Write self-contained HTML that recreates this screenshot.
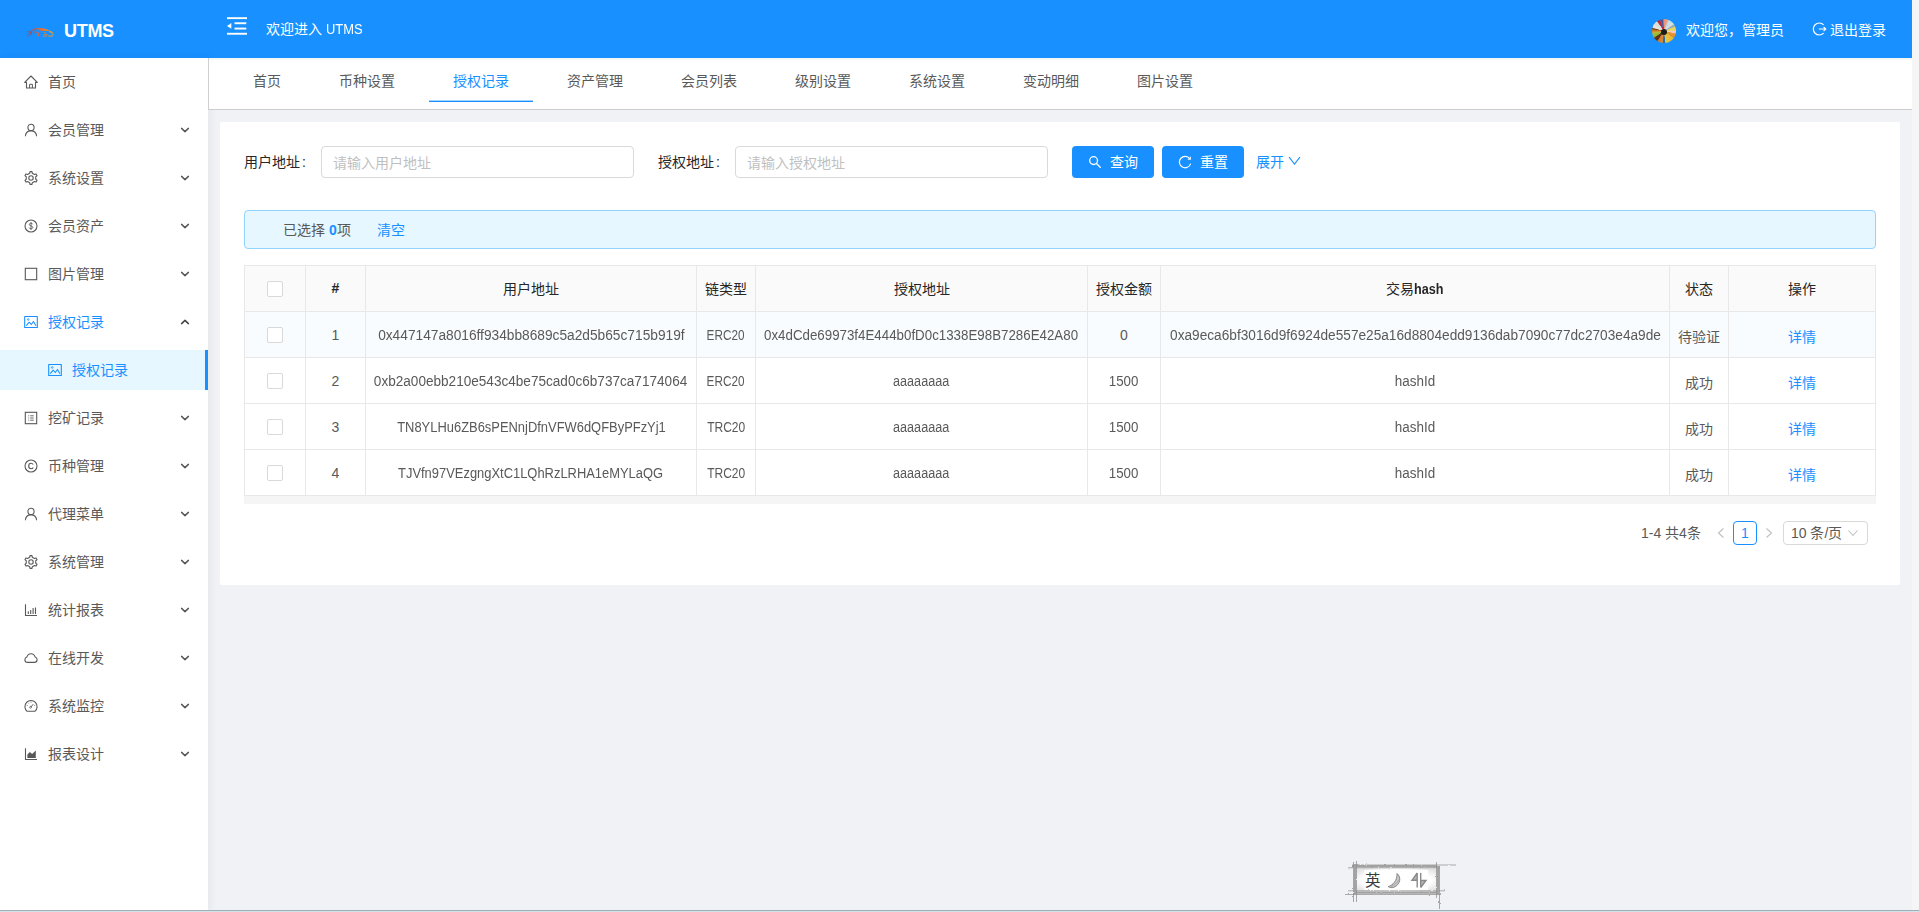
<!DOCTYPE html>
<html lang="zh-CN">
<head>
<meta charset="utf-8">
<title>UTMS</title>
<style>
*{box-sizing:border-box;margin:0;padding:0}
html,body{width:1919px;height:912px;overflow:hidden}
body{font-family:"Liberation Sans",sans-serif;font-size:14px;color:#595959;background:#f0f2f5;position:relative}
.abs{position:absolute}
svg{display:block}
/* header */
#hdr{left:0;top:0;width:1912px;height:58px;background:#1890ff;color:#fff}
#rstrip{left:1912px;top:0;width:7px;height:912px;background:#f5f5f5}
#logo-t{left:64px;top:19px;font-size:18px;font-weight:bold;line-height:24px;letter-spacing:-0.3px}
#welcome{left:266px;top:17px;font-size:14px;line-height:24px}
#user{left:1686px;top:18px;font-size:14px;line-height:24px}
#logout{left:1830px;top:18px;font-size:14px;line-height:24px}
/* sidebar */
#side{left:0;top:58px;width:208px;height:852px;background:#fff;box-shadow:2px 0 8px rgba(29,35,41,.06)}
.mi{position:absolute;left:0;width:208px;height:40px;line-height:40px;color:#595959}
.mi .ic{position:absolute;left:24px;top:13px;width:14px;height:14px}
.mi .tx{position:absolute;left:48px;top:0;white-space:nowrap}
.mi .ar{position:absolute;left:180px;top:15px;width:10px;height:10px}
.mi.sel{color:#1890ff}
.mi.sub{background:#e6f7ff;color:#1890ff;border-right:3px solid #1890ff}
.mi.sub .ic{left:48px}
.mi.sub .tx{left:72px}
/* tabs */
#tabs{left:208px;top:58px;width:1704px;height:52px;background:#fff;border-left:1px solid #d0d0d0;border-bottom:1px solid #ccc;background-image:linear-gradient(rgba(0,21,41,.05),rgba(0,21,41,0) 3px)}
.tab{position:absolute;top:11px;height:24px;line-height:24px;width:104px;text-align:center;color:#595959;white-space:nowrap}
.tab.on{color:#1890ff}
#ink{left:429px;top:100px;width:104px;height:2px;background:linear-gradient(rgba(24,144,255,.4) 0 1px,#1890ff 1px 2px)}
/* card */
#card{left:220px;top:122px;width:1680px;height:463px;background:#fff;border-radius:2px}
.lbl{position:absolute;top:151px;line-height:22px;color:#262626;white-space:nowrap}
.inp{position:absolute;top:146px;height:32px;width:313px;border:1px solid #d9d9d9;border-radius:4px;background:#fff;color:#bfbfbf;line-height:31px;padding-top:1px;padding-left:11px;white-space:nowrap}
.btn{position:absolute;top:146px;height:32px;width:82px;border-radius:4px;background:#1890ff;color:#fff;line-height:32px;white-space:nowrap}
#alert{left:244px;top:210px;width:1632px;height:39px;background:#e6f7ff;border:1px solid #91d5ff;border-radius:4px;line-height:38px}
/* table */
#tbl{left:244px;top:265px;width:1631px;border-collapse:collapse;table-layout:fixed;background:#fff}
#tbl th,#tbl td{border:1px solid #e8e8e8;height:46px;text-align:center;white-space:nowrap;overflow:hidden;padding:0;font-size:14px}
#tbl th{background:#fafafa;color:#262626;font-weight:normal;padding-bottom:1px}
#tbl td span{display:inline-block}
#tbl td{color:#595959}
#tbl tr.hov td{background:#f9fcfe}
#tbl th .cb{position:relative;top:0}
#tbl a{color:#1890ff;position:relative;top:1px}
#tbl td span.c6{position:relative;top:1px}
.cb{display:inline-block;width:16px;height:16px;border:1px solid #d9d9d9;border-radius:2px;background:#fff;vertical-align:middle}
#hsb{left:244px;top:496px;width:1632px;height:8px;background:#f5f5f5}
/* pagination */
.pg{position:absolute;top:521px;height:24px;line-height:24px;white-space:nowrap}
</style>
</head>
<body>
<div id="hdr" class="abs"></div>
<div id="rstrip" class="abs"></div>
<div id="logo-t" class="abs" style="color:#fff">UTMS</div>
<div id="welcome" class="abs" style="color:#fff">欢迎进入 <span style="display:inline-block;transform:scaleX(.924);transform-origin:0 50%">UTMS</span></div>
<div id="user" class="abs" style="color:#fff">欢迎您，管理员</div>
<div id="logout" class="abs" style="color:#fff">退出登录</div>


<svg class="abs" style="left:26px;top:26px;width:28px;height:12px" viewBox="0 0 28 12" fill="none"><defs><linearGradient id="lg" x1="0" y1="0" x2="28" y2="0" gradientUnits="userSpaceOnUse"><stop offset="0" stop-color="#b5302a"/><stop offset=".45" stop-color="#e8622c"/><stop offset="1" stop-color="#f6a623"/></linearGradient></defs>
<path d="M0.800 5.600H4M1.600 7.600H4.500M0.600 9.600H4" stroke="#b5302a" stroke-width=".8" opacity=".45"/>
<path d="M4.200 6.800C5 4.600 7 3.200 10 2.800 13.500 2.400 17.500 2.700 20.500 3.800 23 4.700 25.200 5.600 26.600 6.600" stroke="url(#lg)" stroke-width="1"/>
<path d="M11.500 2.700C15.500 2.300 19.500 3 22.800 4.900L14.500 4.700Z" fill="url(#lg)"/>
<path d="M5.300 5.400V9.200M7.700 4.300V7.600M12.200 6.400V10.300" stroke="url(#lg)" stroke-width="1.300"/>
<path d="M9.500 7.200C10 6 11.300 6 11.800 7" stroke="url(#lg)" stroke-width=".9"/>
<path d="M23.500 6C25.500 6.200 27.200 7.200 27.200 8.600 27.200 9.600 26.200 10.100 24.800 10.100" stroke="url(#lg)" stroke-width=".9"/>
<path d="M17.500 8.700H21.500M17 10.100H20.800M22.200 10.100H25.500M18 6.600H20" stroke="url(#lg)" stroke-width=".9"/>
</svg>
<svg class="abs" style="left:227px;top:17px;width:20px;height:18px" viewBox="0 0 20 18" fill="#fff"><rect x="0" y="0.2" width="20" height="1.900"/><rect x="7.500" y="5.300" width="11.800" height="1.900"/><rect x="7.500" y="10.600" width="11.800" height="1.900"/><rect x="0" y="15.800" width="20" height="1.900"/><path d="M0 8.900 4.300 6V11.800Z"/></svg>
<div class="abs" style="left:1652px;top:19px;width:24px;height:24px;border-radius:50%;overflow:hidden;background:conic-gradient(#e8907a 0deg,#e8a08a 18deg,#bcdde6 24deg,#cfe3e6 48deg,#e6cdb8 54deg,#6fa3d0 62deg,#e8d25a 70deg,#ead868 88deg,#f0cfc8 92deg,#f0c8b8 100deg,#e79a3c 104deg,#e08a30 124deg,#e8b830 128deg,#e8c040 150deg,#e0c850 172deg,#2d6fa0 176deg,#2d6fa0 184deg,#d98a3a 188deg,#c87a30 212deg,#5a2a1a 216deg,#6a3a1a 234deg,#8ab830 238deg,#a8c040 258deg,#e0a030 262deg,#b87020 276deg,#6b3a10 282deg,#e8dcd8 288deg,#ece4e0 300deg,#d8dcd8 304deg,#dde0dc 322deg,#b8303a 326deg,#b03040 338deg,#6a5aa0 342deg,#3a5a9a 352deg,#e8907a 360deg)"><div style="position:absolute;left:9px;top:9.500px;width:6px;height:6px;border-radius:50%;background:#1c1c1c"></div></div>
<svg class="abs" style="left:1812px;top:22px;width:15px;height:14px" viewBox="0 0 15 14" fill="none" stroke="#fff" stroke-width="1.200"><path d="M11.600 2.800A6 6 0 1 0 11.600 11.200"/><path d="M6.800 7H13.600M11.600 5 13.800 7 11.600 9" stroke-width="1.100"/></svg>
<div id="side" class="abs"></div>
<div id="menu" class="abs" style="left:0;top:58px;width:208px;height:852px">
<div class="mi " style="top:4px"><svg class="ic" viewBox="0 0 14 14" fill="none" stroke="currentColor" stroke-width="1.1" stroke-linejoin="round"><path d="M0.700 7.400 L7 1 L13.300 7.400 H11.500 V13 H2.500 V7.400 Z"/><path d="M5.600 13 V9.300 H8.400 V13" stroke-width="1"/></svg><span class="tx">首页</span></div>
<div class="mi " style="top:52px"><svg class="ic" viewBox="0 0 14 14" fill="none" stroke="currentColor" stroke-width="1.1"><circle cx="7" cy="4.400" r="3.100"/><path d="M1.400 13.300 C1.600 9.900 4.100 7.900 7 7.900 C9.900 7.900 12.400 9.900 12.600 13.300"/></svg><span class="tx">会员管理</span><svg class="ar" viewBox="0 0 10 10" fill="none" stroke="currentColor" stroke-width="1.5" stroke-linecap="round" stroke-linejoin="round"><path d="M1.6 3.4 5 6.6 8.400 3.400"/></svg></div>
<div class="mi " style="top:100px"><svg class="ic" viewBox="0 0 14 14" fill="none" stroke="currentColor" stroke-width="1.1" stroke-linejoin="round"><path d="M5.68 2.28 L5.98 0.58 L8.02 0.58 L8.32 2.28 L10.43 3.50 L12.05 2.91 L13.07 4.67 L11.75 5.78 L11.75 8.22 L13.07 9.33 L12.05 11.09 L10.43 10.50 L8.32 11.72 L8.02 13.42 L5.98 13.42 L5.68 11.72 L3.57 10.50 L1.95 11.09 L0.93 9.33 L2.25 8.22 L2.25 5.78 L0.93 4.67 L1.95 2.91 L3.57 3.50Z"/><circle cx="7" cy="7" r="2.2"/></svg><span class="tx">系统设置</span><svg class="ar" viewBox="0 0 10 10" fill="none" stroke="currentColor" stroke-width="1.5" stroke-linecap="round" stroke-linejoin="round"><path d="M1.6 3.4 5 6.6 8.400 3.400"/></svg></div>
<div class="mi " style="top:148px"><svg class="ic" viewBox="0 0 14 14" fill="none" stroke="currentColor" stroke-width="1.1"><circle cx="7" cy="7" r="6"/><path d="M8.7 5.3C8.5 4.500 7.800 4.200 7 4.200 6 4.200 5.300 4.700 5.300 5.500 5.300 7.300 8.800 6.500 8.800 8.500 8.800 9.300 8 9.800 7 9.800 6.100 9.800 5.400 9.400 5.200 8.600M7 3.200V10.800" stroke-width="0.9"/></svg><span class="tx">会员资产</span><svg class="ar" viewBox="0 0 10 10" fill="none" stroke="currentColor" stroke-width="1.5" stroke-linecap="round" stroke-linejoin="round"><path d="M1.6 3.4 5 6.6 8.400 3.400"/></svg></div>
<div class="mi " style="top:196px"><svg class="ic" viewBox="0 0 14 14" fill="none" stroke="currentColor" stroke-width="1.1"><rect x="1.3" y="1.3" width="11.4" height="11.4"/></svg><span class="tx">图片管理</span><svg class="ar" viewBox="0 0 10 10" fill="none" stroke="currentColor" stroke-width="1.5" stroke-linecap="round" stroke-linejoin="round"><path d="M1.6 3.4 5 6.6 8.400 3.400"/></svg></div>
<div class="mi sel" style="top:244px"><svg class="ic" viewBox="0 0 14 14" fill="none" stroke="currentColor" stroke-width="1.1" stroke-linejoin="round"><rect x="0.700" y="1.500" width="12.600" height="11"/><path d="M2.300 10.700 5.200 7.200 7.300 9.500 9.500 6.500 11.900 10.700" stroke-width="1.050"/><circle cx="4.200" cy="4.500" r="0.8" stroke-width="0.8"/></svg><span class="tx">授权记录</span><svg class="ar" viewBox="0 0 10 10" fill="none" stroke="#434343" stroke-width="1.5" stroke-linecap="round" stroke-linejoin="round"><path d="M1.6 6.600 5 3.400 8.400 6.600"/></svg></div>
<div class="mi sub" style="top:292px"><svg class="ic" viewBox="0 0 14 14" fill="none" stroke="currentColor" stroke-width="1.1" stroke-linejoin="round"><rect x="0.700" y="1.500" width="12.600" height="11"/><path d="M2.300 10.700 5.200 7.200 7.300 9.500 9.500 6.500 11.900 10.700" stroke-width="1.050"/><circle cx="4.200" cy="4.500" r="0.8" stroke-width="0.8"/></svg><span class="tx">授权记录</span></div>
<div class="mi " style="top:340px"><svg class="ic" viewBox="0 0 14 14" fill="none" stroke="currentColor" stroke-width="1.1"><rect x="1.3" y="1.300" width="11.400" height="11.400"/><path d="M4.300 4.800h.9M6.200 4.800h3.500M4.300 7h.9M6.200 7h3.500M4.300 9.200h.9M6.200 9.200h3.500" stroke-width="0.9"/></svg><span class="tx">挖矿记录</span><svg class="ar" viewBox="0 0 10 10" fill="none" stroke="currentColor" stroke-width="1.5" stroke-linecap="round" stroke-linejoin="round"><path d="M1.6 3.4 5 6.6 8.400 3.400"/></svg></div>
<div class="mi " style="top:388px"><svg class="ic" viewBox="0 0 14 14" fill="none" stroke="currentColor" stroke-width="1.1"><circle cx="7" cy="7" r="6"/><path d="M9.200 5.600C8.800 4.800 8 4.300 7.100 4.300 5.700 4.300 4.700 5.500 4.700 7 4.700 8.500 5.700 9.700 7.100 9.700 8 9.700 8.800 9.200 9.200 8.400"/></svg><span class="tx">币种管理</span><svg class="ar" viewBox="0 0 10 10" fill="none" stroke="currentColor" stroke-width="1.5" stroke-linecap="round" stroke-linejoin="round"><path d="M1.6 3.4 5 6.6 8.400 3.400"/></svg></div>
<div class="mi " style="top:436px"><svg class="ic" viewBox="0 0 14 14" fill="none" stroke="currentColor" stroke-width="1.1"><circle cx="7" cy="4.400" r="3.100"/><path d="M1.400 13.300 C1.600 9.900 4.100 7.900 7 7.900 C9.900 7.900 12.400 9.900 12.600 13.300"/></svg><span class="tx">代理菜单</span><svg class="ar" viewBox="0 0 10 10" fill="none" stroke="currentColor" stroke-width="1.5" stroke-linecap="round" stroke-linejoin="round"><path d="M1.6 3.4 5 6.6 8.400 3.400"/></svg></div>
<div class="mi " style="top:484px"><svg class="ic" viewBox="0 0 14 14" fill="none" stroke="currentColor" stroke-width="1.1" stroke-linejoin="round"><path d="M5.68 2.28 L5.98 0.58 L8.02 0.58 L8.32 2.28 L10.43 3.50 L12.05 2.91 L13.07 4.67 L11.75 5.78 L11.75 8.22 L13.07 9.33 L12.05 11.09 L10.43 10.50 L8.32 11.72 L8.02 13.42 L5.98 13.42 L5.68 11.72 L3.57 10.50 L1.95 11.09 L0.93 9.33 L2.25 8.22 L2.25 5.78 L0.93 4.67 L1.95 2.91 L3.57 3.50Z"/><circle cx="7" cy="7" r="2.2"/></svg><span class="tx">系统管理</span><svg class="ar" viewBox="0 0 10 10" fill="none" stroke="currentColor" stroke-width="1.5" stroke-linecap="round" stroke-linejoin="round"><path d="M1.6 3.4 5 6.6 8.400 3.400"/></svg></div>
<div class="mi " style="top:532px"><svg class="ic" viewBox="0 0 14 14" fill="none" stroke="currentColor" stroke-width="1.1"><path d="M1.500 1.300V12.500H13"/><path d="M4.300 10.900V8.300M6.700 10.900V7.100M9.100 10.900V5M11.500 10.900V4.400" stroke-width="1.100"/></svg><span class="tx">统计报表</span><svg class="ar" viewBox="0 0 10 10" fill="none" stroke="currentColor" stroke-width="1.5" stroke-linecap="round" stroke-linejoin="round"><path d="M1.6 3.4 5 6.6 8.400 3.400"/></svg></div>
<div class="mi " style="top:580px"><svg class="ic" viewBox="0 0 14 14" fill="none" stroke="currentColor" stroke-width="1.1" stroke-linejoin="round"><path d="M3.700 11.400C2.100 11.400 0.900 10.200 0.900 8.700 0.900 7.500 1.700 6.500 2.800 6.100 3.400 4.100 5 2.700 7 2.700 9 2.700 10.600 4.100 11.200 6.100 12.300 6.500 13.100 7.500 13.100 8.700 13.100 10.200 11.900 11.400 10.300 11.400Z"/></svg><span class="tx">在线开发</span><svg class="ar" viewBox="0 0 10 10" fill="none" stroke="currentColor" stroke-width="1.5" stroke-linecap="round" stroke-linejoin="round"><path d="M1.6 3.4 5 6.6 8.400 3.400"/></svg></div>
<div class="mi " style="top:628px"><svg class="ic" viewBox="0 0 14 14" fill="none" stroke="currentColor" stroke-width="1.1"><path d="M3.100 12.300A6.100 6.100 0 1 1 10.900 12.300Z" stroke-linejoin="round"/><path d="M6.800 8 9.300 5.200" stroke-width="1"/><circle cx="6.600" cy="8.300" r="0.9" stroke-width="0.8"/><path d="M7 2.700V3.700M2.700 6.200 3.600 6.500M11.300 6.200 10.400 6.500M4 3.700 4.600 4.400" stroke-width="0.8"/></svg><span class="tx">系统监控</span><svg class="ar" viewBox="0 0 10 10" fill="none" stroke="currentColor" stroke-width="1.5" stroke-linecap="round" stroke-linejoin="round"><path d="M1.6 3.4 5 6.6 8.400 3.400"/></svg></div>
<div class="mi " style="top:676px"><svg class="ic" viewBox="0 0 14 14" fill="none" stroke="currentColor" stroke-width="1.1"><path d="M1.500 1.300V12.500H13"/><path d="M3.400 10.900V7.600L5.900 4.900 8.100 7.100 11.800 3.500V10.900Z" fill="currentColor" stroke="none"/></svg><span class="tx">报表设计</span><svg class="ar" viewBox="0 0 10 10" fill="none" stroke="currentColor" stroke-width="1.5" stroke-linecap="round" stroke-linejoin="round"><path d="M1.6 3.4 5 6.6 8.400 3.400"/></svg></div>
</div>

<div id="tabs" class="abs"></div>
<div class="tab" style="left:215px;top:69px">首页</div>
<div class="tab" style="left:315px;top:69px">币种设置</div>
<div class="tab on" style="left:429px;top:69px">授权记录</div>
<div class="tab" style="left:543px;top:69px">资产管理</div>
<div class="tab" style="left:657px;top:69px">会员列表</div>
<div class="tab" style="left:771px;top:69px">级别设置</div>
<div class="tab" style="left:885px;top:69px">系统设置</div>
<div class="tab" style="left:999px;top:69px">变动明细</div>
<div class="tab" style="left:1113px;top:69px">图片设置</div>
<div id="ink" class="abs"></div>

<div id="card" class="abs"></div>
<div class="lbl" style="left:244px">用户地址<span style="margin-left:2px">:</span></div>
<div class="inp" style="left:321px">请输入用户地址</div>
<div class="lbl" style="left:658px">授权地址<span style="margin-left:2px">:</span></div>
<div class="inp" style="left:735px">请输入授权地址</div>
<div class="btn" style="left:1072px"><svg class="abs" style="left:16px;top:9px;width:14px;height:14px" viewBox="0 0 14 14" fill="none" stroke="#fff" stroke-width="1.300"><circle cx="5.600" cy="5.600" r="3.900"/><path d="M8.500 8.500 12.700 12.700"/></svg><span class="abs" style="left:38px;top:0">查询</span></div>
<div class="btn" style="left:1162px"><svg class="abs" style="left:16px;top:9px;width:14px;height:14px" viewBox="0 0 14 14" fill="none" stroke="#fff" stroke-width="1.200"><path d="M11.800 3.800A5.700 5.700 0 1 0 12.600 8.600"/><path d="M12.300 1.800V4.300H9.800" stroke-width="1.100"/></svg><span class="abs" style="left:38px;top:0">重置</span></div>
<div class="abs" style="left:1256px;top:151px;line-height:22px;color:#1890ff;white-space:nowrap">展开</div>
<svg class="abs" style="left:1288px;top:155px;width:13px;height:12px" viewBox="0 0 13 12" fill="none" stroke="#1890ff" stroke-width="1.200"><path d="M1 2 6.500 9 12 2"/></svg>
<div id="alert" class="abs"><span class="abs" style="left:38px;top:0;white-space:nowrap;color:#595959">已选择 <b style="color:#1890ff">0</b>项</span><span class="abs" style="left:132px;top:0;color:#1890ff;white-space:nowrap">清空</span></div>
<table id="tbl" class="abs"><colgroup><col style="width:61px"><col style="width:60px"><col style="width:331px"><col style="width:59px"><col style="width:332px"><col style="width:73px"><col style="width:509px"><col style="width:59px"><col style="width:147px"></colgroup>
<tr><th><span class="cb"></span></th><th><b>#</b></th><th>用户地址</th><th>链类型</th><th>授权地址</th><th>授权金额</th><th>交易<b style="display:inline-block;transform:scaleX(.9);transform-origin:0 50%;margin-right:-3px">hash</b></th><th>状态</th><th>操作</th></tr>
<tr class="hov"><td><span class="cb"></span></td><td><span class="c0 r0">1</span></td><td><span class="c1 r0" style="transform:scaleX(0.98)">0x447147a8016ff934bb8689c5a2d5b65c715b919f</span></td><td><span class="c2 r0" style="transform:scaleX(0.84)">ERC20</span></td><td><span class="c3 r0" style="transform:scaleX(0.9515)">0x4dCde69973f4E444b0fD0c1338E98B7286E42A80</span></td><td><span class="c4 r0">0</span></td><td><span class="c5 r0" style="transform:scaleX(0.976)">0xa9eca6bf3016d9f6924de557e25a16d8804edd9136dab7090c77dc2703e4a9de</span></td><td><span class="c6 r0">待验证</span></td><td><a>详情</a></td></tr>
<tr><td><span class="cb"></span></td><td><span class="c0 r1">2</span></td><td><span class="c1 r1" style="transform:scaleX(0.97)">0xb2a00ebb210e543c4be75cad0c6b737ca7174064</span></td><td><span class="c2 r1" style="transform:scaleX(0.84)">ERC20</span></td><td><span class="c3 r1" style="transform:scaleX(0.902)">aaaaaaaa</span></td><td><span class="c4 r1" style="transform:scaleX(0.95)">1500</span></td><td><span class="c5 r1" style="transform:scaleX(0.96)">hashId</span></td><td><span class="c6 r1">成功</span></td><td><a>详情</a></td></tr>
<tr><td><span class="cb"></span></td><td><span class="c0 r2">3</span></td><td><span class="c1 r2" style="transform:scaleX(0.923)">TN8YLHu6ZB6sPENnjDfnVFW6dQFByPFzYj1</span></td><td><span class="c2 r2" style="transform:scaleX(0.858)">TRC20</span></td><td><span class="c3 r2" style="transform:scaleX(0.902)">aaaaaaaa</span></td><td><span class="c4 r2" style="transform:scaleX(0.95)">1500</span></td><td><span class="c5 r2" style="transform:scaleX(0.96)">hashId</span></td><td><span class="c6 r2">成功</span></td><td><a>详情</a></td></tr>
<tr><td><span class="cb"></span></td><td><span class="c0 r3">4</span></td><td><span class="c1 r3" style="transform:scaleX(0.923)">TJVfn97VEzgngXtC1LQhRzLRHA1eMYLaQG</span></td><td><span class="c2 r3" style="transform:scaleX(0.858)">TRC20</span></td><td><span class="c3 r3" style="transform:scaleX(0.902)">aaaaaaaa</span></td><td><span class="c4 r3" style="transform:scaleX(0.95)">1500</span></td><td><span class="c5 r3" style="transform:scaleX(0.96)">hashId</span></td><td><span class="c6 r3">成功</span></td><td><a>详情</a></td></tr>
</table>
<div id="hsb" class="abs"></div>
<div class="pg" style="left:1641px">1-4 共4条</div>
<svg class="abs" style="left:1716px;top:527px;width:10px;height:12px" viewBox="0 0 10 12" fill="none" stroke="#bfbfbf" stroke-width="1.1"><path d="M7.500 1.500 2.500 6 7.500 10.500"/></svg>
<div class="pg" style="left:1733px;width:24px;border:1px solid #1890ff;border-radius:4px;color:#1890ff;text-align:center;line-height:22px;background:#fff">1</div>
<svg class="abs" style="left:1764px;top:527px;width:10px;height:12px" viewBox="0 0 10 12" fill="none" stroke="#bfbfbf" stroke-width="1.1"><path d="M2.500 1.500 7.500 6 2.500 10.500"/></svg>
<div class="pg" style="left:1783px;width:85px;border:1px solid #d9d9d9;border-radius:4px;line-height:22px;padding-left:7px;background:#fff">10 条/页</div>
<svg class="abs" style="left:1847px;top:528px;width:12px;height:10px" viewBox="0 0 12 10" fill="none" stroke="#bfbfbf" stroke-width="1.1"><path d="M1.500 2.500 6 7.500 10.500 2.500"/></svg>
<svg class="abs" style="left:1340px;top:858px;width:120px;height:52px" viewBox="0 0 120 52" fill="none">
<defs><filter id="rough" x="-5%" y="-5%" width="110%" height="110%"><feTurbulence type="fractalNoise" baseFrequency="0.35" numOctaves="2" seed="3" result="n"/><feDisplacementMap in="SourceGraphic" in2="n" scale="2.200" xChannelSelector="R" yChannelSelector="G"/></filter>
<radialGradient id="ig" cx="50%" cy="50%" r="60%"><stop offset=".7" stop-color="#fff"/><stop offset="1" stop-color="#e4e4e4"/></radialGradient></defs>
<rect x="16" y="10" width="81" height="24" fill="url(#ig)"/>
<rect x="24.500" y="12.200" width="16" height="19.600" fill="#fff"/><rect x="46" y="12.200" width="17" height="19.600" fill="#fff"/><rect x="70" y="12.200" width="18" height="19.600" fill="#fff"/>
<g stroke="#8c8c8c" stroke-width="1" filter="url(#rough)">
<path d="M8 9.800H100M12 7H116" opacity=".7"/><path d="M12 8.300H97" stroke-width="2.400" stroke="#a2a2a2"/>
<path d="M8 32.800H105M5 36.500H101" opacity=".7"/><path d="M13 34.600H98" stroke-width="2.400" stroke="#a2a2a2"/>
<path d="M13.500 3V44M16.500 3V44" opacity=".75"/><path d="M15 6V37" stroke-width="2" stroke="#a2a2a2"/>
<path d="M96.500 4V40M99.500 8V51" opacity=".75"/><path d="M98 8V37" stroke-width="2" stroke="#a2a2a2"/>
</g>
<text x="25" y="28" font-family="Liberation Sans, sans-serif" font-size="15.500" fill="#3a3a3a">英</text>
<path d="M57 15.500C61.500 19 60.500 26.500 54 29.200 51.500 30 49.500 29.600 48.200 28.600 52.500 27.600 57.500 22.500 57 15.500Z" fill="#c9c9c9" stroke="#7d7d7d" stroke-width=".9"/>
<path d="M51 28.200C54 27.600 57.500 25 58.800 21.500" stroke="#9a9a9a" stroke-width=".7"/>
<path d="M77.200 15V29.500M77.200 15 72 22.200H77.200M80.700 15V29.500M80.700 29.500 86 22.500H80.700" stroke="#8a8a8a" stroke-width="1.400" fill="#b5b5b5"/>
</svg>


<div id="botline" class="abs" style="left:0;top:910px;width:1919px;height:1px;background:#a3adb5"></div>
<div id="botline2" class="abs" style="left:0;top:911px;width:1919px;height:1px;background:#cfe3ea"></div>
</body>
</html>
